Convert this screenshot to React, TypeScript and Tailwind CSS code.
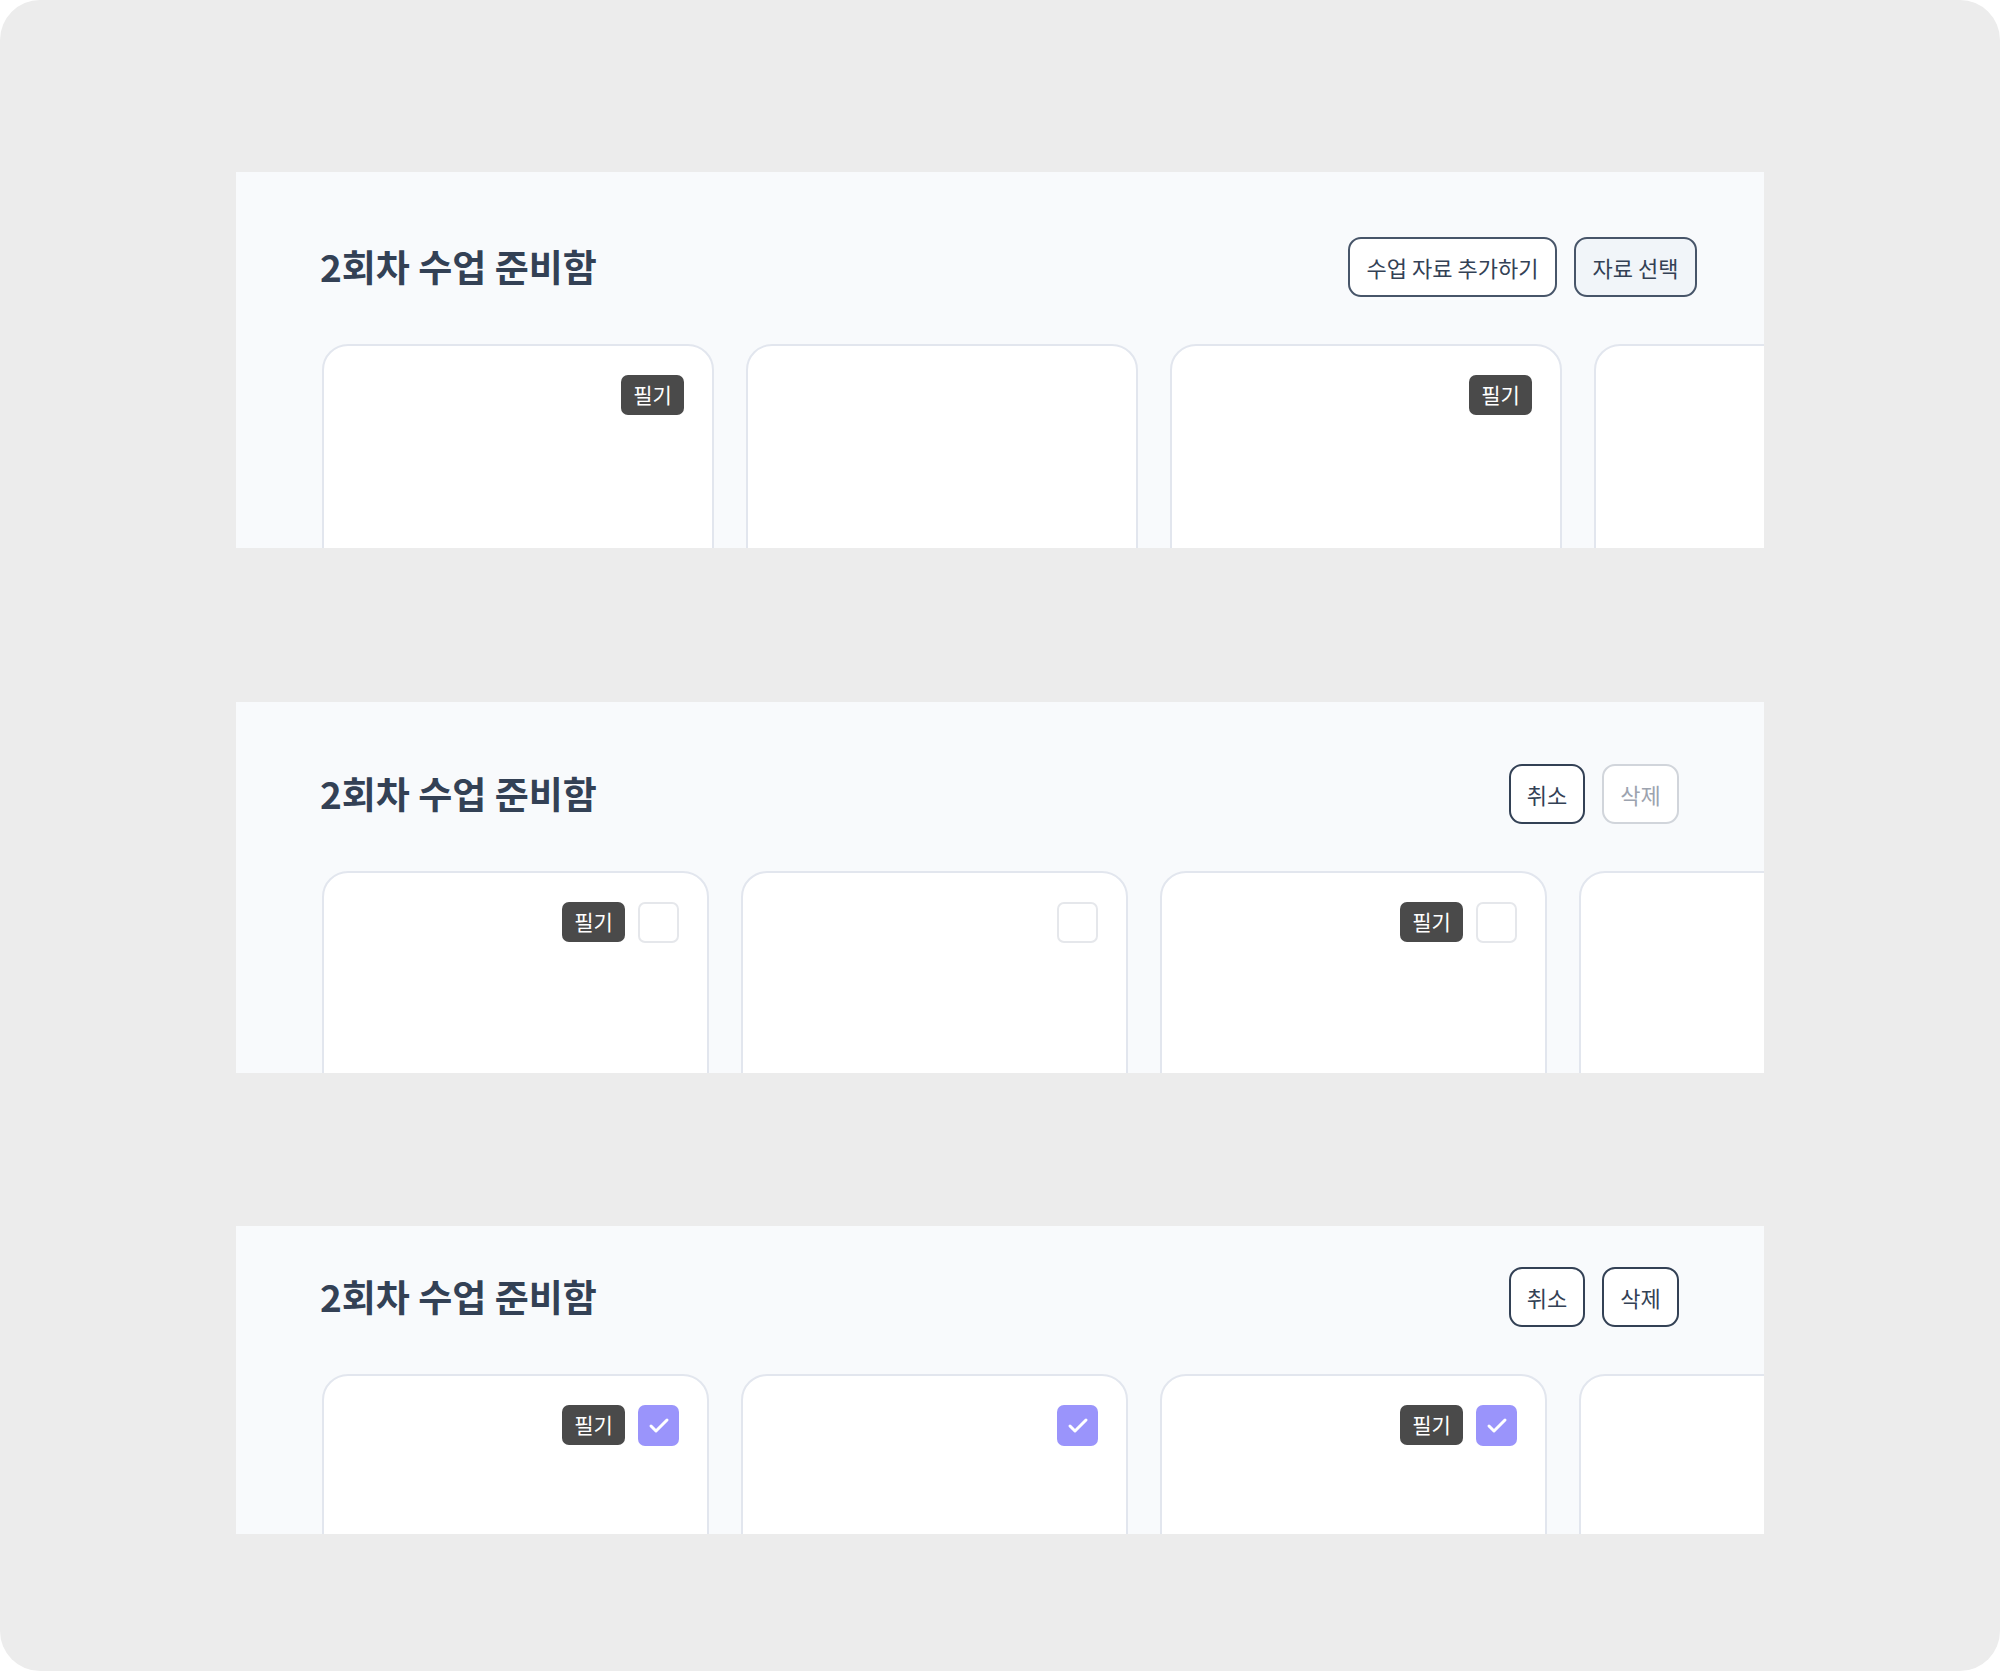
import { Check } from "lucide-react";

type Mode = "view" | "select" | "selected";

interface PanelProps {
  mode: Mode;
  height: string;
  headerTop: string;
  rightPad: string;
  cardWidth: string;
}

const cards = [
  { note: true },
  { note: false },
  { note: true },
  { note: false },
];

function NoteBadge() {
  return (
    <div className="flex h-[40px] w-[63px] items-center justify-center rounded-[7px] bg-[#4a4a4a] text-[21px] text-white">
      필기
    </div>
  );
}

function CheckBox({ checked }: { checked: boolean }) {
  if (checked) {
    return (
      <div className="flex h-[41px] w-[41px] items-center justify-center rounded-[7px] bg-[#9a94fb]">
        <Check className="h-[24px] w-[24px] text-white" strokeWidth={3} />
      </div>
    );
  }

  return (
    <div className="h-[41px] w-[41px] rounded-[7px] border-2 border-[#e5e7eb] bg-white" />
  );
}

function Panel({ mode, height, headerTop, rightPad, cardWidth }: PanelProps) {
  return (
    <section className={`w-full overflow-hidden bg-[#f8fafc] ${height}`}>
      {/* Header */}
      <div className={`flex h-[60px] items-center justify-between pl-[84px] ${headerTop} ${rightPad}`}>
        <h2 className="text-[37px] font-bold text-[#334155]">
          2회차 수업 준비함
        </h2>

        {mode === "view" ? (
          <div className="flex gap-[17px]">
            <button className="flex h-[60px] w-[209px] items-center justify-center rounded-[13px] border-2 border-[#475569] bg-white text-[22px] text-[#334155]">
              수업 자료 추가하기
            </button>
            <button className="flex h-[60px] w-[123px] items-center justify-center rounded-[13px] border-2 border-[#475569] bg-[#f1f5f9] text-[22px] text-[#334155]">
              자료 선택
            </button>
          </div>
        ) : (
          <div className="flex gap-[17px]">
            <button className="flex h-[60px] w-[76px] items-center justify-center rounded-[13px] border-2 border-[#334155] bg-white text-[22px] text-[#334155]">
              취소
            </button>
            {mode === "select" ? (
              <button className="flex h-[60px] w-[77px] items-center justify-center rounded-[13px] border-2 border-[#d1d5db] bg-white text-[22px] text-[#9ca3af]">
                삭제
              </button>
            ) : (
              <button className="flex h-[60px] w-[77px] items-center justify-center rounded-[13px] border-2 border-[#334155] bg-white text-[22px] text-[#334155]">
                삭제
              </button>
            )}
          </div>
        )}
      </div>

      {/* Cards */}
      <div className="mt-[47px] flex gap-[32px] pl-[86px]">
        {cards.map((card, index) => (
          <div
            key={index}
            className={`h-[300px] shrink-0 rounded-[26px] border-2 border-[#e2e6ee] bg-white ${cardWidth}`}
          >
            <div className="flex justify-end gap-[13px] pr-[28px] pt-[29px]">
              {mode === "view" ? (
                card.note && <NoteBadge />
              ) : (
                <>
                  {card.note && <NoteBadge />}
                  <CheckBox checked={mode === "selected"} />
                </>
              )}
            </div>
          </div>
        ))}
      </div>
    </section>
  );
}

export default function App() {
  return (
    <div
      className="min-h-[1671px] w-full bg-white"
      style={{ fontFamily: '"Noto Sans CJK KR", "Noto Sans", sans-serif' }}
    >
      <div className="flex h-[1671px] w-full flex-col rounded-[40px] bg-[#ececec] px-[236px] pt-[172px]">
        <Panel
          mode="view"
          height="h-[376px]"
          headerTop="mt-[65px]"
          rightPad="pr-[67px]"
          cardWidth="w-[392px]"
        />

        <div className="h-[154px] shrink-0" />

        <Panel
          mode="select"
          height="h-[371px]"
          headerTop="mt-[62px]"
          rightPad="pr-[85px]"
          cardWidth="w-[387px]"
        />

        <div className="h-[153px] shrink-0" />

        <Panel
          mode="selected"
          height="h-[308px]"
          headerTop="mt-[41px]"
          rightPad="pr-[85px]"
          cardWidth="w-[387px]"
        />
      </div>
    </div>
  );
}
